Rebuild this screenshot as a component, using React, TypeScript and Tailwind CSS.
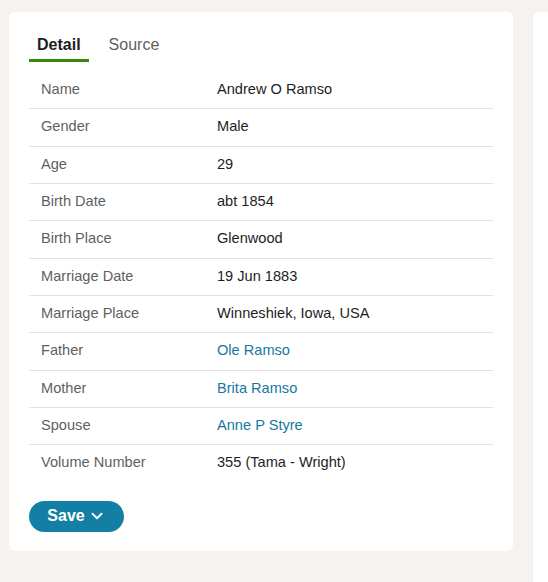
import React, { useState } from 'react'
import { ChevronDown } from 'lucide-react'

type Row = { label: string; value: string; link?: boolean }

const rows: Row[] = [
  { label: 'Name', value: 'Andrew O Ramso' },
  { label: 'Gender', value: 'Male' },
  { label: 'Age', value: '29' },
  { label: 'Birth Date', value: 'abt 1854' },
  { label: 'Birth Place', value: 'Glenwood' },
  { label: 'Marriage Date', value: '19 Jun 1883' },
  { label: 'Marriage Place', value: 'Winneshiek, Iowa, USA' },
  { label: 'Father', value: 'Ole Ramso', link: true },
  { label: 'Mother', value: 'Brita Ramso', link: true },
  { label: 'Spouse', value: 'Anne P Styre', link: true },
  { label: 'Volume Number', value: '355 (Tama - Wright)' },
]

export default function App() {
  const [tab, setTab] = useState<'detail' | 'source'>('detail')

  return (
    <div
      className="flex min-h-screen items-start gap-5 overflow-hidden bg-[#f5f2ef] pl-[9px] pt-3"
      style={{ fontFamily: '"Liberation Sans", Arial, sans-serif' }}
    >
      {/* record card */}
      <div className="w-[504px] shrink-0 rounded-md bg-white px-5 pb-[19px] pt-5">
        <div className="flex gap-3">
          <button
            onClick={() => setTab('detail')}
            className={
              tab === 'detail'
                ? 'border-b-[3px] border-[#3b8a10] px-2 pb-[4px] pt-[2px] text-[16px] font-bold leading-[21px] text-[#1e1e1e]'
                : 'border-b-[3px] border-transparent px-2 pb-[4px] pt-[2px] text-[16px] leading-[21px] text-[#5f5f5f]'
            }
          >
            Detail
          </button>
          <button
            onClick={() => setTab('source')}
            className={
              tab === 'source'
                ? 'border-b-[3px] border-[#3b8a10] px-2 pb-[4px] pt-[2px] text-[16px] font-bold leading-[21px] text-[#1e1e1e]'
                : 'border-b-[3px] border-transparent px-2 pb-[4px] pt-[2px] text-[16px] leading-[21px] text-[#5f5f5f]'
            }
          >
            Source
          </button>
        </div>

        <div className="mt-[10px]">
          {rows.map((r, i) => (
            <div
              key={r.label}
              className={
                i < rows.length - 1
                  ? 'grid grid-cols-[176px_1fr] border-b border-[#e3e3e3] pb-[9px] pt-[7px] text-[14.6px] leading-[20.33px]'
                  : 'grid grid-cols-[176px_1fr] border-b border-transparent pb-[9px] pt-[7px] text-[14.6px] leading-[20.33px]'
              }
            >
              <div className="px-3 text-[#5f5f5f]">{r.label}</div>
              <div className="px-3">
                {r.link ? (
                  <a href="#" className="text-[#15799f]">
                    {r.value}
                  </a>
                ) : (
                  <span className="text-[#1e1e1e]">{r.value}</span>
                )}
              </div>
            </div>
          ))}
        </div>

        <button className="mt-[18px] flex h-[31px] w-[95px] items-center justify-center gap-[3px] rounded-full bg-[#137fa5] text-[16px] font-bold text-white">
          Save
          <ChevronDown size={18} strokeWidth={2.5} />
        </button>
      </div>

      {/* next panel, cut off by the window */}
      <div className="h-[700px] flex-1 rounded-tl-md bg-white" />
    </div>
  )
}
